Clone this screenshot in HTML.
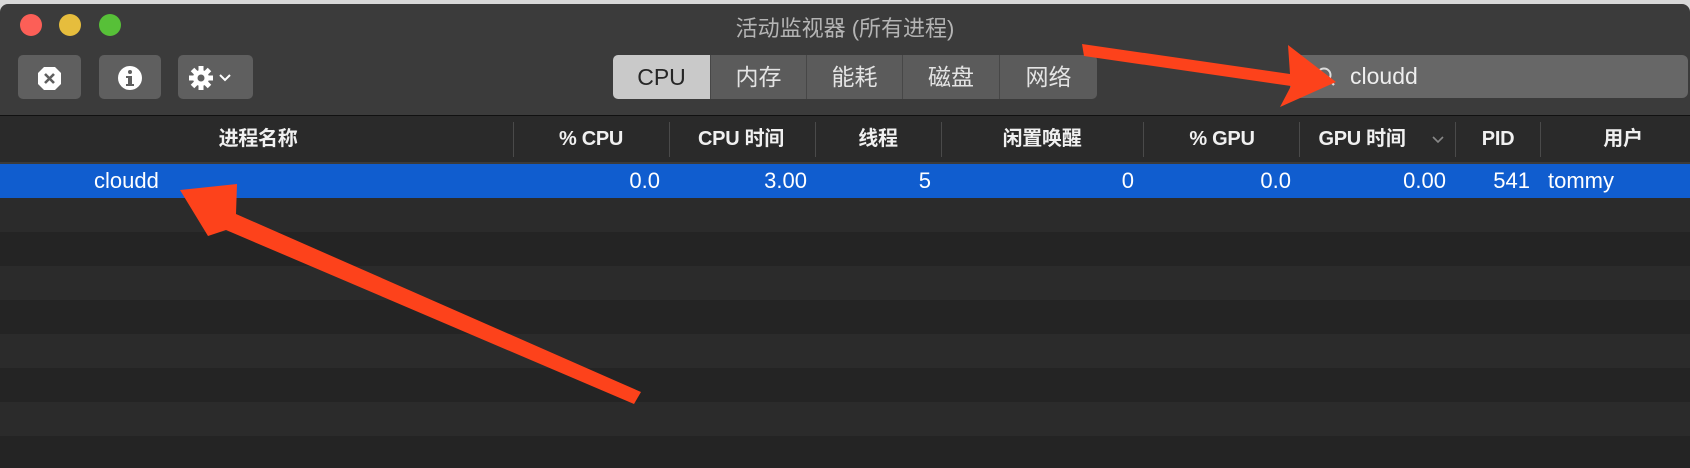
<!DOCTYPE html>
<html><head><meta charset="utf-8"><style>
*{margin:0;padding:0;box-sizing:border-box}
body{width:1690px;height:468px;overflow:hidden;background:#d8d8d8;font-family:"Liberation Sans","Noto Sans CJK SC",sans-serif;position:relative}
.win{position:absolute;left:0;top:4px;width:1690px;height:464px;background:#3b3b3b;border-radius:8px 8px 0 0;overflow:hidden}
.abs{position:absolute}
.tl{position:absolute;top:10px;width:22px;height:22px;border-radius:50%}
.btn{position:absolute;top:51px;height:44px;background:#5f5f5f;border-radius:5px}
.title{position:absolute;left:0;width:1690px;top:7px;text-align:center;color:#b4b4b4;font-size:22px}
.seg{position:absolute;top:51px;height:44px;background:#5b5b5b;color:#e4e4e4;font-size:23px;line-height:44px;text-align:center;border-right:1px solid #474747}
.search{position:absolute;left:1290px;top:51px;width:398px;height:43px;background:#676767;border-radius:6px}
.hdr{position:absolute;top:111px;left:0;width:1690px;height:47px;background:#2a2a2a;border-top:1px solid #111}
.h{position:absolute;top:0;line-height:47px;color:#f0f0f0;font-size:20px;font-weight:bold;transform:translateX(-50%);white-space:nowrap;letter-spacing:-0.3px}
.div{position:absolute;top:6px;width:1px;height:35px;background:#4a4a4a}
.row{position:absolute;left:0;width:1690px;height:34px}
.c{position:absolute;line-height:34px;color:#fff;font-size:22px;white-space:nowrap}
.r{transform:translateX(-100%)}
</style></head><body>
<div class="win">
 <div class="tl" style="left:20px;background:#fc5f57"></div>
 <div class="tl" style="left:59px;background:#e6bd3d"></div>
 <div class="tl" style="left:99px;background:#57c038"></div>
 <div class="title">活动监视器 (所有进程)</div>
 <div class="btn" style="left:18px;width:63px">
  <svg width="63" height="44"><polygon points="26,12 37,12 43,18 43,29 37,35 26,35 20,29 20,18" fill="#fff"/><path d="M27,19 L36,28 M36,19 L27,28" stroke="#5f5f5f" stroke-width="2.6"/></svg>
 </div>
 <div class="btn" style="left:99px;width:62px">
  <svg width="62" height="44"><circle cx="31" cy="23" r="12" fill="#fff"/><circle cx="31" cy="17" r="2" fill="#5f5f5f"/><rect x="29" y="21" width="4" height="10" fill="#5f5f5f"/><rect x="27" y="29" width="8" height="2" fill="#5f5f5f"/><rect x="27" y="21" width="5" height="2" fill="#5f5f5f"/></svg>
 </div>
 <div class="btn" style="left:178px;width:75px">
  <svg width="75" height="44"><g transform="translate(23,23)" fill="#fff"><circle r="8"/><rect x="-2.5" y="-12" width="5" height="24"/><rect x="-2.5" y="-12" width="5" height="24" transform="rotate(45)"/><rect x="-2.5" y="-12" width="5" height="24" transform="rotate(90)"/><rect x="-2.5" y="-12" width="5" height="24" transform="rotate(135)"/><circle r="3.5" fill="#5f5f5f"/></g><path d="M42,20 L47,25 L52,20" stroke="#fff" stroke-width="2" fill="none"/></svg>
 </div>
 <div class="seg" style="left:613px;width:98px;background:#c9c9c9;color:#262626;border-radius:5px 0 0 5px">CPU</div>
 <div class="seg" style="left:711px;width:96px">内存</div>
 <div class="seg" style="left:807px;width:96px">能耗</div>
 <div class="seg" style="left:903px;width:97px">磁盘</div>
 <div class="seg" style="left:1000px;width:97px;border-radius:0 5px 5px 0;border:none">网络</div>
 <div class="search">
  <svg class="abs" style="left:24px;top:10px" width="24" height="24"><circle cx="10" cy="10" r="6.5" stroke="#ddd" stroke-width="2" fill="none"/><path d="M15,15 L20,20" stroke="#ddd" stroke-width="2.2"/></svg>
  <div class="abs" style="left:60px;top:0;line-height:43px;color:#eee;font-size:23px">cloudd</div>
 </div>
 <div class="hdr">
  <div class="h" style="left:258px">进程名称</div><div class="div" style="left:513px"></div>
  <div class="h" style="left:591px">% CPU</div><div class="div" style="left:669px"></div>
  <div class="h" style="left:741px">CPU 时间</div><div class="div" style="left:815px"></div>
  <div class="h" style="left:878px">线程</div><div class="div" style="left:941px"></div>
  <div class="h" style="left:1042px">闲置唤醒</div><div class="div" style="left:1143px"></div>
  <div class="h" style="left:1222px">% GPU</div><div class="div" style="left:1299px"></div>
  <div class="h" style="left:1362px">GPU 时间</div>
  <svg class="abs" style="left:1431px;top:19px" width="14" height="10"><path d="M2,2 L7,7 L12,2" stroke="#888" stroke-width="1.6" fill="none"/></svg>
  <div class="div" style="left:1455px"></div>
  <div class="h" style="left:1498px">PID</div><div class="div" style="left:1540px"></div>
  <div class="h" style="left:1623px">用户</div>
 </div>
 <div class="row" style="top:160px;background:#105dcf">
  <div class="c" style="left:94px">cloudd</div>
  <div class="c r" style="left:660px">0.0</div>
  <div class="c r" style="left:807px">3.00</div>
  <div class="c r" style="left:931px">5</div>
  <div class="c r" style="left:1134px">0</div>
  <div class="c r" style="left:1291px">0.0</div>
  <div class="c r" style="left:1446px">0.00</div>
  <div class="c r" style="left:1530px">541</div>
  <div class="c" style="left:1548px">tommy</div>
 </div>
 <div class="row" style="top:194px;background:#2b2b2b"></div>
 <div class="row" style="top:228px;background:#242424"></div>
 <div class="row" style="top:262px;background:#2b2b2b"></div>
 <div class="row" style="top:296px;background:#242424"></div>
 <div class="row" style="top:330px;background:#2b2b2b"></div>
 <div class="row" style="top:364px;background:#242424"></div>
 <div class="row" style="top:398px;background:#2b2b2b"></div>
 <div class="row" style="top:432px;background:#242424"></div>
</div>
<svg class="abs" style="left:0;top:0" width="1690" height="468">
 <polygon fill="#fd421b" points="1082,44 1084,56 1291,86 1280,107 1336,82 1288,45 1290,74"/>
 <polygon fill="#fd421b" points="634,404 641,392 236,214 237,184 180,190 208,236 226,230"/>
</svg>
</body></html>
